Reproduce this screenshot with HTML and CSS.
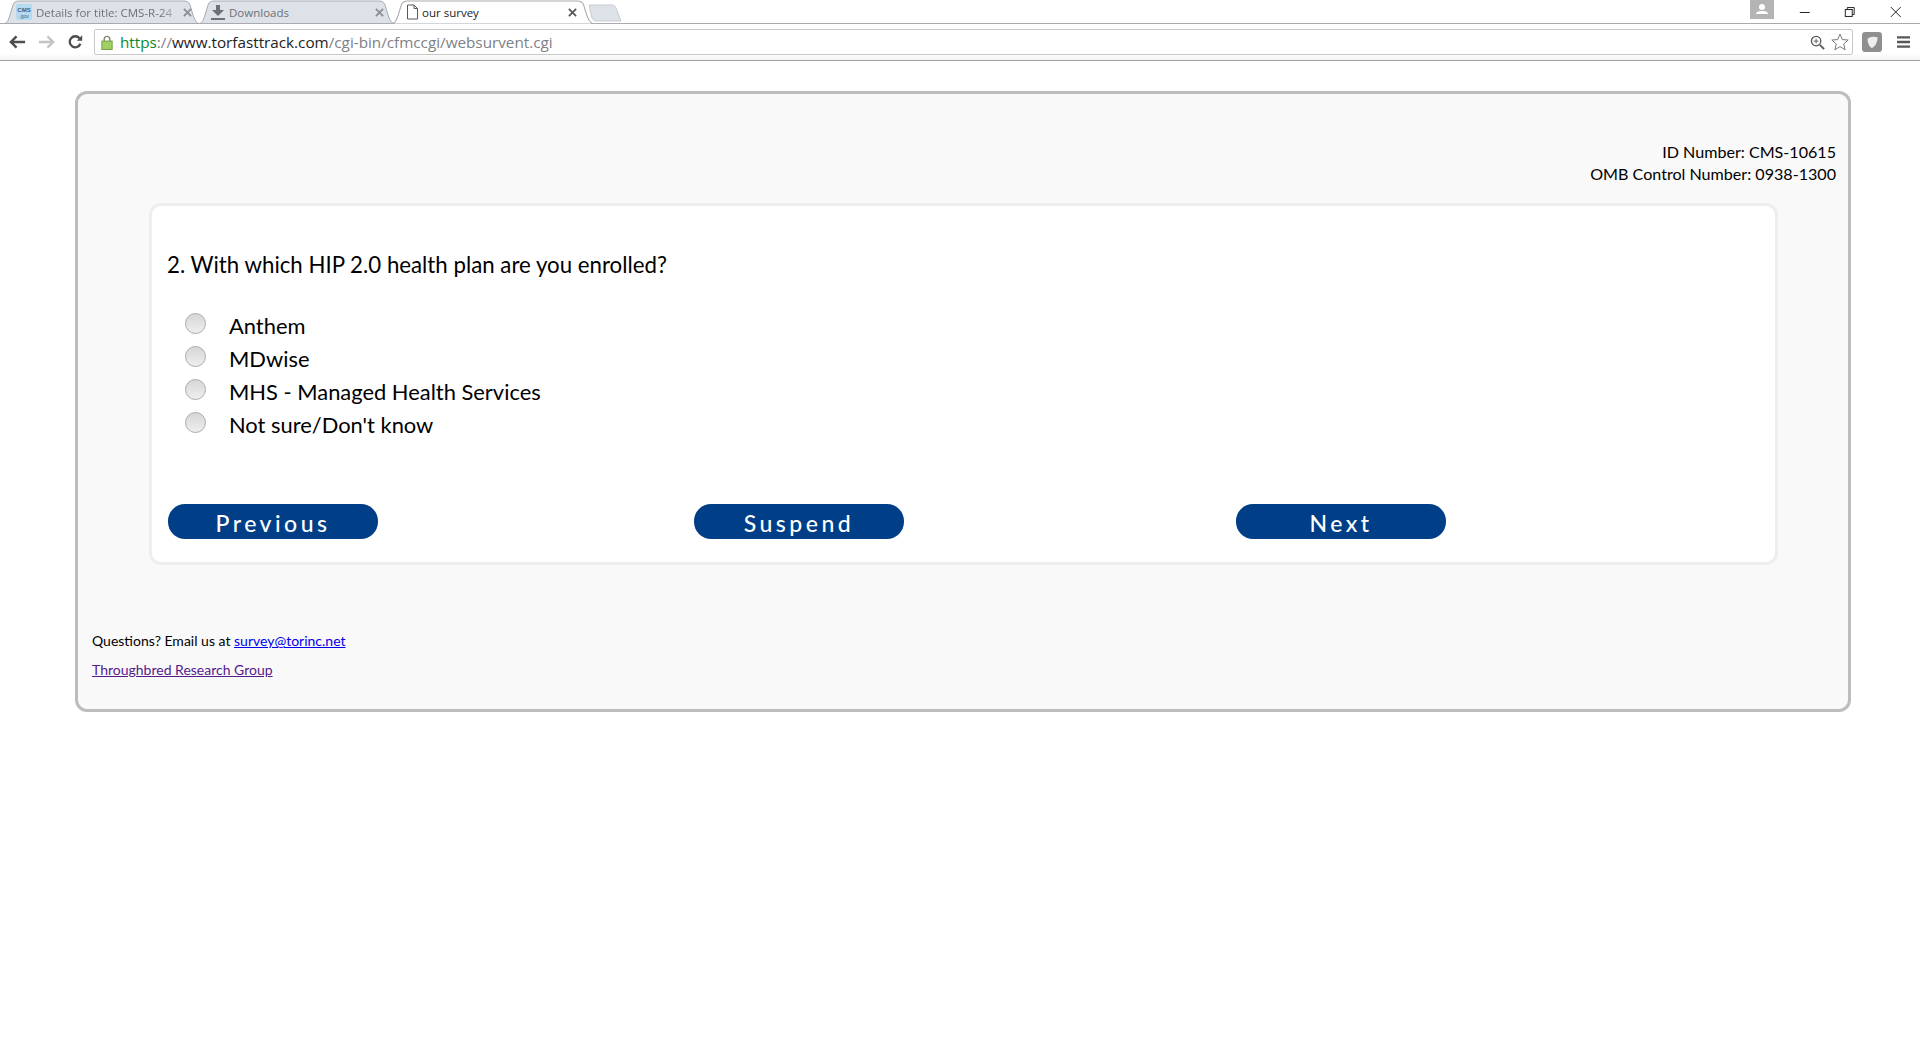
FILE: index.html
```html
<!DOCTYPE html>
<html lang="en">
<head>
<meta charset="utf-8">
<title>our survey</title>
<link rel="stylesheet" href="styles.css">
</head>
<body>
<header class="browser">
  <div class="tabstrip">
    <div class="tab tab-first">
      <svg class="tab-shape" viewBox="0 0 200 24" preserveAspectRatio="none"><path d="M0 24C5 24 6 21 8 15L11 5C12 2 14 1 17 1H182C185 1 187 2 188 5L191 15C193 21 195 24 200 24Z" fill="#dde1e8" stroke="#a9abb0"/></svg>
      <svg class="favicon" viewBox="0 0 16 16"><rect width="16" height="16" rx="2" fill="#b5d9ef"/><text x="8" y="7.5" class="fav-top">CMS</text><text x="8" y="13.5" class="fav-bot">.gov</text></svg>
      <span class="tab-title tab-title-fade">Details for title: CMS-R-24</span>
      <svg class="tab-x" viewBox="0 0 10 10"><path d="M1 1L9 9M9 1L1 9" stroke="#8b8d92" stroke-width="2"/></svg>
    </div>
    <div class="tab tab-second">
      <svg class="tab-shape" viewBox="0 0 200 24" preserveAspectRatio="none"><path d="M0 24C5 24 6 21 8 15L11 5C12 2 14 1 17 1H182C185 1 187 2 188 5L191 15C193 21 195 24 200 24Z" fill="#dde1e8" stroke="#a9abb0"/></svg>
      <svg class="favicon" viewBox="0 0 16 16"><path d="M6 1H10V6H14L8 12L2 6H6Z" fill="#6e7074"/><rect x="1" y="14" width="14" height="2" fill="#6e7074"/></svg>
      <span class="tab-title">Downloads</span>
      <svg class="tab-x" viewBox="0 0 10 10"><path d="M1 1L9 9M9 1L1 9" stroke="#8b8d92" stroke-width="2"/></svg>
    </div>
    <div class="tab tab-active">
      <svg class="tab-shape" viewBox="0 0 200 24" preserveAspectRatio="none"><path d="M0 24C5 24 6 21 8 15L11 5C12 2 14 1 17 1H182C185 1 187 2 188 5L191 15C193 21 195 24 200 24Z" fill="#fff" stroke="#a9abb0"/></svg>
      <svg class="favicon" viewBox="0 0 16 16"><path d="M3.5 1H10L13.5 4.500V15H3.500Z M10 1V4.500H13.500" fill="#fff" stroke="#55575a"/></svg>
      <span class="tab-title tab-title-active">our survey</span>
      <svg class="tab-x" viewBox="0 0 10 10"><path d="M1 1L9 9M9 1L1 9" stroke="#55575a" stroke-width="2"/></svg>
    </div>
    <svg class="newtab" viewBox="0 0 34 18"><path d="M1 1H24C26 1 27 2 28 4L33 17H8C6 17 5 16 4 14Z" fill="#dde1e8" stroke="#c8cbd0"/></svg>
    <div class="window-controls">
      <div class="avatar"><svg viewBox="0 0 24 18"><circle cx="12" cy="7" r="3" fill="#fff"/><path d="M6 14C6 11.500 9.500 11 12 11S18 11.500 18 14Z" fill="#fff"/></svg></div>
      <svg class="win-btn" viewBox="0 0 46 24"><path d="M18 12.500H28" stroke="#222" stroke-width="1"/></svg>
      <svg class="win-btn" viewBox="0 0 46 24"><path d="M20.500 9.500V7.500H27.500V14.500H25.500" fill="none" stroke="#222"/><rect x="18.500" y="9.500" width="7" height="7" fill="none" stroke="#222"/></svg>
      <svg class="win-btn" viewBox="0 0 46 24"><path d="M18 7L28 17M28 7L18 17" stroke="#222"/></svg>
    </div>
  </div>
  <div class="toolbar">
    <svg class="nav-icon" viewBox="0 0 18 16"><path d="M8 2L2 8L8 14M2 8H17" fill="none" stroke="#4b4d50" stroke-width="2.600"/></svg>
    <svg class="nav-icon" viewBox="0 0 18 16"><path d="M10 2L16 8L10 14M16 8H1" fill="none" stroke="#c3c4c6" stroke-width="2.600"/></svg>
    <svg class="nav-icon" viewBox="0 0 18 18"><path d="M14.500 11A6.200 6.200 0 1 1 13.500 4.800" fill="none" stroke="#4b4d50" stroke-width="2.600"/><path d="M10.500 7.500H16.500V1.500Z" fill="#4b4d50"/></svg>
    <div class="omnibox">
      <svg class="lock" viewBox="0 0 12 16"><path d="M3 7V4.500A3 3 0 0 1 9 4.500V7" fill="none" stroke="#7c8a74" stroke-width="1.500"/><rect x=".5" y="6.500" width="11" height="9" fill="#9ed064" stroke="#6f9b43"/></svg>
      <span class="url"><span class="scheme">https</span><span class="muted">://</span><span class="host">www.torfasttrack.com</span><span class="muted">/cgi-bin/cfmccgi/websurvent.cgi</span></span>
      <svg class="zoom-icon" viewBox="0 0 16 16"><circle cx="6.500" cy="6.500" r="5" fill="none" stroke="#55575a" stroke-width="1.400"/><path d="M4 6.500H9M6.500 4V9" stroke="#55575a"/><path d="M10.500 10.500L15 15" stroke="#55575a" stroke-width="2"/></svg>
      <svg class="star-icon" viewBox="0 0 18 18"><path d="M9 1L11.300 6.600L17.200 7L12.700 10.900L14.100 16.800L9 13.600L3.900 16.800L5.300 10.900L.8 7L6.700 6.600Z" fill="#fff" stroke="#77797c"/></svg>
    </div>
    <svg class="ext-icon" viewBox="0 0 18 18"><rect width="18" height="18" rx="3" fill="#8d8f91"/><path d="M5 6C8 4 12 4 14 5C14 9 12 13 9 14.500C6 13 5 9 5 6Z" fill="#eee"/></svg>
    <svg class="menu-icon" viewBox="0 0 14 14"><path d="M0 2H14M0 7H14M0 12H14" stroke="#55575a" stroke-width="2.500"/></svg>
  </div>
</header>
<main class="survey">
  <div class="ids">
    <div>ID Number: CMS-10615</div>
    <div>OMB Control Number: 0938-1300</div>
  </div>
  <section class="card">
    <h1 class="question">2. With which HIP 2.0 health plan are you enrolled?</h1>
    <div class="options">
      <label class="option"><input type="radio" name="plan"><span>Anthem</span></label>
      <label class="option"><input type="radio" name="plan"><span>MDwise</span></label>
      <label class="option"><input type="radio" name="plan"><span>MHS - Managed Health Services</span></label>
      <label class="option"><input type="radio" name="plan"><span>Not sure/Don't know</span></label>
    </div>
    <div class="actions">
      <button class="btn">Previous</button>
      <button class="btn">Suspend</button>
      <button class="btn">Next</button>
    </div>
  </section>
  <footer class="foot">
    <p>Questions? Email us at <a class="link" href="#">survey@torinc.net</a></p>
    <p><a class="link link-visited" href="#">Throughbred Research Group</a></p>
  </footer>
</main>
</body>
</html>
```

FILE: styles.css
```css
* { box-sizing: border-box; }
html, body { margin: 0; padding: 0; background: #fff; }
body { font-family: Lato, "Open Sans", sans-serif; color: #000; }

.browser { height: 61px; font-family: "Open Sans", sans-serif; }
.tabstrip { display: flex; height: 24px; padding-left: 2px; align-items: flex-start; position: relative; background: #fff; }
.tabstrip::after { content: ""; position: absolute; left: 0; right: 0; bottom: 0; height: 1px; background: #a9abb0; }
.tab { position: relative; width: 200px; height: 24px; margin-right: -5px; display: flex; align-items: center; padding: 0 10px 0 14px; font-size: 11.500px; color: #6f7176; }
.tab-second { margin-right: -7px; padding-left: 13px; padding-right: 13px; }
.tab-active { z-index: 2; width: 206px; padding-left: 14px; padding-right: 19px; }
.tab-shape { position: absolute; left: 0; top: 0; width: 100%; height: 24px; }
.favicon { position: relative; width: 16px; height: 16px; flex: none; margin-right: 4px; }
.tab-second .favicon { margin-right: 3px; }
.tab-active .favicon { margin-right: 2px; }
.fav-top { font: bold 6px "Liberation Sans", sans-serif; text-anchor: middle; fill: #41607e; }
.fav-bot { font: 5px "Liberation Sans", sans-serif; text-anchor: middle; fill: #41607e; }
.tab-title { position: relative; flex: 1; white-space: nowrap; overflow: hidden; }
.tab-title-active { color: #222; }
.tab-title-fade { -webkit-mask-image: linear-gradient(to right, #000 85%, transparent 100%); mask-image: linear-gradient(to right, #000 85%, transparent 100%); }
.tab-x { position: relative; width: 9px; height: 9px; flex: none; }
.newtab { width: 34px; height: 18px; margin: 4px 0 0 -3px; position: relative; z-index: 1; flex: none; }

.window-controls { margin-left: auto; display: flex; align-items: flex-start; height: 20px; position: relative; z-index: 3; padding-right: 2px; }
.avatar { width: 24px; height: 19px; background: #b4b4b4; margin-right: 7.500px; }
.avatar svg { display: block; width: 24px; height: 18px; }
.win-btn { width: 45.500px; height: 24px; display: block; }

.toolbar { height: 37px; display: flex; align-items: center; padding: 0 10px 0 9px; background: linear-gradient(#fff 80%, #f3f3f3); border-bottom: 1px solid #a0a0a0; position: relative; }
.nav-icon { width: 17px; height: 16px; margin-right: 12px; flex: none; }
.omnibox { flex: 1; height: 26px; margin: 0 9px 0 -2px; background: #fff; border: 1px solid #c8c8c8; border-radius: 2px; display: flex; align-items: center; padding: 0 3px 0 6px; }
.lock { width: 12px; height: 15px; flex: none; margin-right: 7px; }
.url { font-size: 15.250px; white-space: nowrap; flex: 1; color: #888; }
.scheme { color: #0a8a2c; }
.muted { color: #7e8186; }
.host { color: #222; }
.zoom-icon { width: 15px; height: 15px; margin-right: 6px; }
.star-icon { width: 18px; height: 18px; }
.ext-icon { width: 20px; height: 20px; flex: none; margin-right: 15px; }
.menu-icon { width: 13px; height: 14px; flex: none; }

.survey { margin: 30px 0 0 75px; width: 1776px; height: 621px; background: #f9f9f9; border: 3px solid #bdbdbd; border-radius: 12px; display: flow-root; }
.ids { margin-top: 47px; padding-right: 12px; text-align: right; font-size: 16.100px; line-height: 22px; }
.card { margin: 18px 0 0 71px; width: 1629px; height: 362px; background: #fff; border: 3px solid #eee; border-radius: 12px; padding: 0 15px; }
.question { margin: 0; padding-top: 43px; font-weight: 400; font-size: 22.250px; line-height: 32px; }
.options { margin-top: 32px; padding-left: 18px; }
.option { display: flex; height: 33px; font-size: 21.900px; line-height: 26px; }
.option input { appearance: none; -webkit-appearance: none; width: 21px; height: 21px; margin: 0 23px 0 0; flex: none; border: 1px solid #aaa; border-radius: 50%; background: linear-gradient(#d6d6d6, #efefef); }
.option span { display: block; }
.actions { display: grid; grid-template-columns: 526px 542px 210px; margin-top: 59px; padding-left: 1px; }
.btn { width: 210px; height: 35px; border: 0; border-radius: 17px; background: #003f87; color: #fff; font: 500 23px/35px Lato, sans-serif; letter-spacing: 3.500px; padding: 2px 0 0; }

.foot { margin: 67px 0 0 14px; font-size: 14px; line-height: 18px; }
.foot p { margin: 0 0 11px; }
.link { color: #0000ee; }
.link-visited { color: #551a8b; }
```
